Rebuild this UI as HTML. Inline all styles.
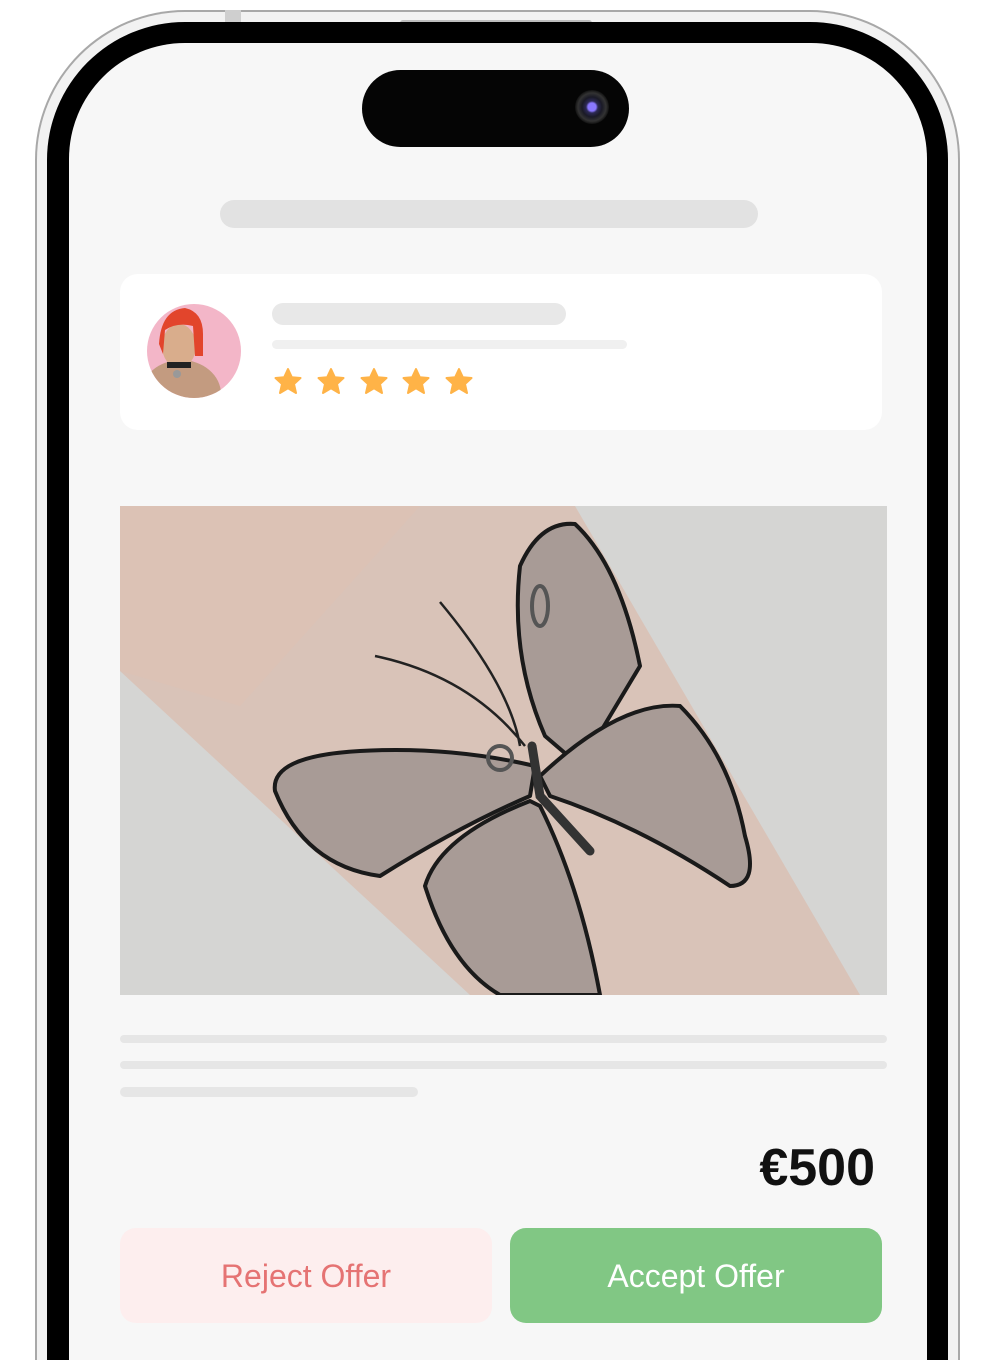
<!DOCTYPE html>
<html style="width:1002px;height:1360px;overflow:hidden"><head><meta charset="utf-8"><style>
*{margin:0;padding:0;box-sizing:border-box}
body{width:1002px;height:1360px;background:#fff;overflow:hidden;font-family:"Liberation Sans",sans-serif}
#wrap{position:relative;width:1002px;height:1360px;overflow:hidden}
.frame{position:absolute;left:35px;top:10px;width:925px;height:1350px;border-radius:150px 150px 0 0;background:#f2f2f2;border:2px solid #a8a8a8;border-bottom:none}
.bezel{position:absolute;left:47px;top:22px;width:901px;height:1338px;border-radius:138px 138px 0 0;background:#000}
.screen{position:absolute;left:69px;top:43px;width:858px;height:1317px;border-radius:116px 116px 0 0;background:#f7f7f7}
.abs{position:absolute}
</style></head><body><div id="wrap">
<div class="frame"></div>
<div class="abs" style="left:225px;top:10px;width:16px;height:12px;background:#cfcfcf"></div>
<div class="abs" style="left:400px;top:20px;width:192px;height:7px;background:#bdbdbd;border-radius:3px"></div>
<div class="bezel"></div>
<div class="screen"></div>
<div class="abs" style="left:362px;top:70px;width:267px;height:77px;border-radius:39px;background:#050505"></div>
<div class="abs" style="left:575px;top:90px;width:34px;height:34px;border-radius:50%;background:radial-gradient(circle,#8a78ff 0 4px,#2d2a55 6px,#1a1a26 10px,#333 14px,#111 17px)"></div>
<div class="abs" style="left:220px;top:200px;width:538px;height:28px;border-radius:14px;background:#e2e2e2"></div>
<div class="abs" style="left:120px;top:274px;width:762px;height:156px;border-radius:18px;background:#fff"></div>
<div class="abs" style="left:147px;top:304px;width:94px;height:94px;border-radius:50%;overflow:hidden;background:#f3b6c8">
<svg width="94" height="94"><ellipse cx="34" cy="90" rx="40" ry="34" fill="#c39b80"/><ellipse cx="32" cy="42" rx="17" ry="22" fill="#d9ad8c"/><path d="M12 40 Q14 6 38 4 Q56 8 56 30 L56 52 L48 52 L46 22 Q30 18 18 26 L16 50 Z" fill="#e2452c"/><rect x="20" y="58" width="24" height="6" fill="#222"/><circle cx="30" cy="70" r="4" fill="#999"/></svg></div>
<div class="abs" style="left:272px;top:303px;width:294px;height:22px;border-radius:11px;background:#e8e8e8"></div>
<div class="abs" style="left:272px;top:340px;width:355px;height:9px;border-radius:5px;background:#f0f0f0"></div>
<svg class="abs" style="left:272px;top:367px" width="210" height="34">
<defs><path id="s" d="M14 2 L17.8 10.2 L26.5 11 L20 17 L22 26 L14 21.3 L6 26 L8 17 L1.5 11 L10.2 10.2 Z" fill="#ffb347" stroke="#ffb347" stroke-width="2" stroke-linejoin="round"/></defs>
<use href="#s" x="2"/><use href="#s" x="45"/><use href="#s" x="88"/><use href="#s" x="130"/><use href="#s" x="173"/></svg>
<svg class="abs" style="left:120px;top:506px" width="767" height="489" viewBox="0 0 767 489">
<rect width="767" height="489" fill="#d5d5d3"/>
<polygon points="0,0 455,0 740,489 350,489 0,165" fill="#d9c3b8"/>
<polygon points="0,0 300,0 120,200 0,165" fill="#dcc2b5"/>
<g stroke="#1a1a1a" fill="#a89b96" stroke-width="4" stroke-linejoin="round">
<path d="M425 230 Q390 150 400 60 Q420 15 455 18 Q500 60 520 160 L460 260 Z"/>
<path d="M420 270 Q500 195 560 200 Q610 250 625 330 Q640 380 610 380 Q520 320 430 290 Z"/>
<path d="M415 260 Q330 240 240 245 Q150 250 155 285 Q185 360 260 370 Q340 320 410 290 Z"/>
<path d="M410 295 Q320 330 305 380 Q330 460 380 489 L480 489 Q460 380 420 300 Z"/>
</g>
<path d="M400 240 Q390 180 320 96 M405 240 Q350 170 255 150" stroke="#222" stroke-width="2.5" fill="none"/>
<path d="M412 240 L420 290 L470 345" stroke="#333" stroke-width="9" stroke-linecap="round" fill="none"/>
<circle cx="380" cy="252" r="12" fill="none" stroke="#555" stroke-width="4"/>
<ellipse cx="420" cy="100" rx="8" ry="20" fill="none" stroke="#555" stroke-width="4"/>
</svg>
<div class="abs" style="left:120px;top:1035px;width:767px;height:8px;border-radius:4px;background:#e6e6e6"></div>
<div class="abs" style="left:120px;top:1061px;width:767px;height:8px;border-radius:4px;background:#e6e6e6"></div>
<div class="abs" style="left:120px;top:1087px;width:298px;height:10px;border-radius:5px;background:#e6e6e6"></div>
<div class="abs" style="left:600px;top:1140px;width:275px;text-align:right;font-size:52px;font-weight:bold;color:#111;line-height:56px">€500</div>
<div class="abs" style="left:120px;top:1228px;width:372px;height:95px;border-radius:16px;background:#fdeeee;color:#e57373;font-size:32px;text-align:center;line-height:97px">Reject Offer</div>
<div class="abs" style="left:510px;top:1228px;width:372px;height:95px;border-radius:16px;background:#81c784;color:#fff;font-size:32px;text-align:center;line-height:97px">Accept Offer</div>
</div></body></html>
